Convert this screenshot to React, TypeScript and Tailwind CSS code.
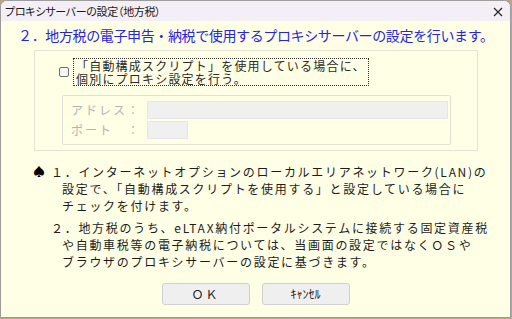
const jp = "font-['Noto_Sans_CJK_JP','Noto_Sans',sans-serif]";

function Checkbox() {
  return (
    <span className="block h-[10px] w-[10px] shrink-0 rounded-[2px] border border-[#6f6f6f] bg-[#f7f7f7]" />
  );
}

function NoteLines({ lines }: { lines: string[] }) {
  return (
    <div className="text-[12px] leading-[17px] tracking-[1.7px] text-[#1c1c1c]">
      {lines.map((l, i) => (
        <div key={i} className={i === 0 ? "whitespace-nowrap" : "whitespace-nowrap pl-[11px]"}>
          {l}
        </div>
      ))}
    </div>
  );
}

export default function App() {
  return (
    <div className={`h-[319px] w-[512px] bg-[#b7a48c] ${jp}`}>
      <div className="flex h-[318px] w-[511px] flex-col overflow-hidden rounded-t-[7px] border border-[#9c9c9c] bg-[#ffffe6]">
        <div className="flex h-[20px] shrink-0 items-center justify-between bg-[#f4eef6] pl-[4px] pr-[7px]">
          <span className="text-[11px] leading-none tracking-[-0.3px] text-[#1a1a1a] [font-feature-settings:'palt']">
            プロキシサーバーの設定（地方税）
          </span>
          <svg width="10" height="10" viewBox="0 0 10 10" className="mt-[1px]">
            <path d="M1 1L9 9M9 1L1 9" stroke="#222" strokeWidth="1.1" />
          </svg>
        </div>

        <div className="flex flex-1 flex-col">
          <div className="whitespace-nowrap pl-[17px] pt-[6px] text-[14px] leading-[16px] tracking-[-0.37px] text-[#2626e0]">
            ２．地方税の電子申告・納税で使用するプロキシサーバーの設定を行います。
          </div>

          <div className="ml-[33px] mt-[7px] h-[101px] w-[444px] border border-[#e2e2d6] pl-[24px] pt-[7px]">
            <div className="flex items-center gap-[4px]">
              <Checkbox />
              <div className="h-[28px] w-[296px] border border-dotted border-[#333] px-[2px] text-[12px] leading-[13px] tracking-[1.2px] text-[#2a2a2a]">
                <div className="whitespace-nowrap">「自動構成スクリプト」を使用している場合に、</div>
                <div className="whitespace-nowrap">個別にプロキシ設定を行う。</div>
              </div>
            </div>

            <div className="ml-[3px] mt-[9px] flex h-[50px] w-[389px] flex-col gap-[2px] rounded-[2px] border border-[#e0e0d4] pl-[8px] pt-[5px]">
              <div className="flex items-center">
                <span className="w-[76px] whitespace-nowrap text-[12px] tracking-[2px] text-[#b3b3b3]">アドレス：</span>
                <span className="h-[18px] w-[301px] border border-[#e6e6e6] bg-[#f0f0f0]" />
              </div>
              <div className="flex items-center">
                <span className="w-[76px] whitespace-nowrap text-[12px] tracking-[2px] text-[#b3b3b3]">ポート　：</span>
                <span className="h-[18px] w-[41px] border border-[#e6e6e6] bg-[#f0f0f0]" />
              </div>
            </div>
          </div>

          <div className="ml-[32px] mt-[12px] flex gap-[6px]">
            <span className="text-[12px] leading-[17px] text-black">♠</span>
            <div className="flex flex-col gap-[5px]">
              <NoteLines
                lines={[
                  "１．インターネットオプションのローカルエリアネットワーク(LAN)の",
                  "設定で、「自動構成スクリプトを使用する」と設定している場合に",
                  "チェックを付けます。",
                ]}
              />
              <NoteLines
                lines={[
                  "２．地方税のうち、eLTAX納付ポータルシステムに接続する固定資産税",
                  "や自動車税等の電子納税については、当画面の設定ではなくＯＳや",
                  "ブラウザのプロキシサーバーの設定に基づきます。",
                ]}
              />
            </div>
          </div>

          <div className="mt-[13px] flex justify-center gap-[12px]">
            <button className="h-[22px] w-[88px] rounded-[3px] border border-[#d0d0d0] bg-[#efefef] text-[12px] tracking-[2px] text-[#222]">
              ＯＫ
            </button>
            <button className="h-[22px] w-[88px] rounded-[3px] border border-[#d0d0d0] bg-[#efefef] text-[12px] text-[#222]">
              ｷｬﾝｾﾙ
            </button>
          </div>
        </div>
      </div>
    </div>
  );
}
